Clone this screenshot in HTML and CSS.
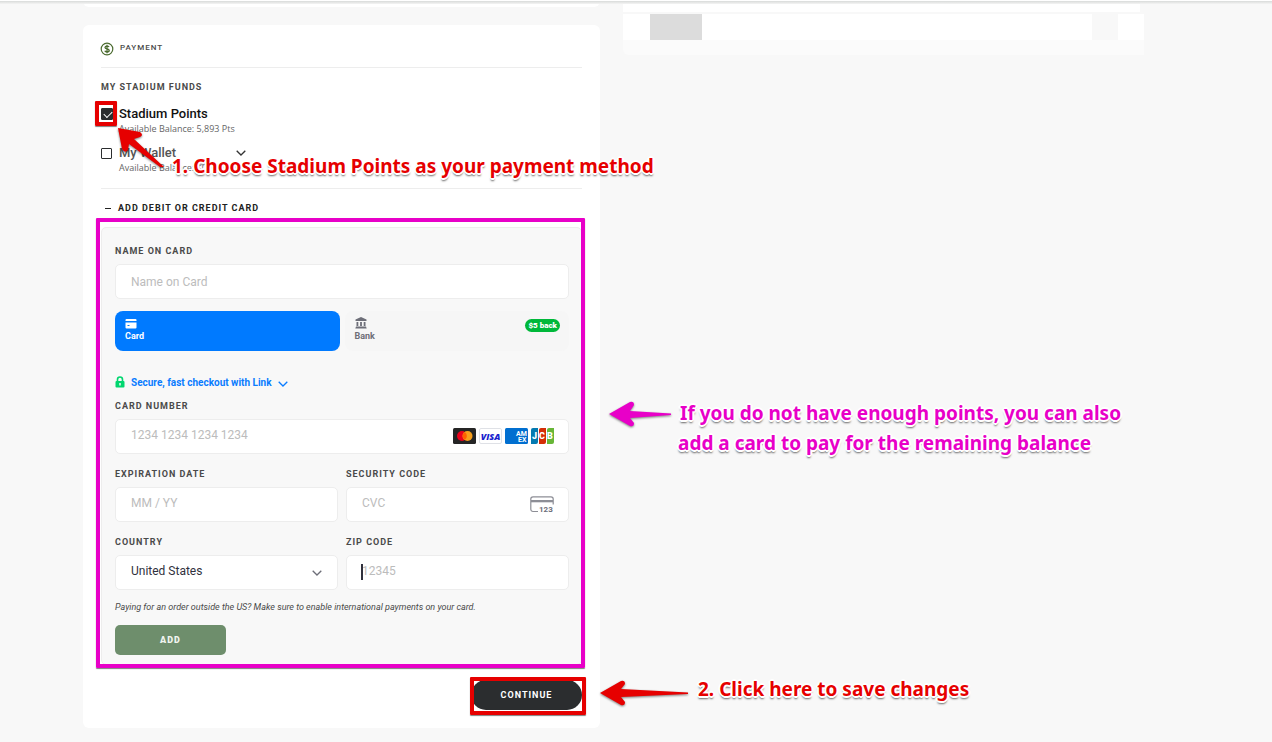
FILE: index.html
```html
<!DOCTYPE html>
<html lang="en">
<head>
  <meta charset="UTF-8">
  <meta name="viewport" content="width=device-width, initial-scale=1.0">
  <title>Checkout - Payment</title>
  <link rel="stylesheet" href="styles.css">
</head>
<body>
  <header class="topbar"></header>

  <main class="page">
    <div class="column">
      <section class="card card-previous"></section>

      <section class="card payment">
        <div class="payment-header">
          <svg class="dollar-icon" viewBox="0 0 14 14" width="14" height="14" fill="none" stroke="#4b6b2f">
            <circle cx="7" cy="7" r="5.8" stroke-width="1.2"/>
            <path d="M9 5.1C8.7 4.4 8 4.1 7 4.1C5.8 4.1 5 4.6 5 5.5C5 7.5 9.2 6.4 9.2 8.5C9.2 9.4 8.3 9.9 7.1 9.9C5.9 9.9 5.1 9.5 4.8 8.7M7 2.8V11.2" stroke-width="1.3"/>
          </svg>
          <h2>Payment</h2>
        </div>

        <div class="funds">
          <h3>My Stadium Funds</h3>

          <div class="fund">
            <span class="check-wrap">
              <input type="checkbox" id="points" checked>
              <span class="frame frame-check"></span>
            </span>
            <div>
              <label for="points" class="fund-name">Stadium Points</label>
              <p class="balance">Available Balance: 5,893 Pts</p>
            </div>
          </div>

          <div class="fund fund-wallet">
            <span class="check-wrap"><input type="checkbox" id="wallet"></span>
            <div>
              <label for="wallet" class="fund-name">My Wallet</label>
              <p class="balance">Available Balance: $0</p>
            </div>
            <svg class="wallet-chevron" viewBox="0 0 10 6" width="10" height="6" fill="none" stroke="#333" stroke-width="1.3"><path d="M.7.7L5 5L9.3.7"/></svg>
          </div>

          <!-- Step 1 -->
          <svg class="arrow arrow-points" viewBox="0 0 50 44" width="50" height="44">
            <path d="M1 1L23 5Q27 8 23 10L17 12L47 40L43 40L12 17L11 23Q8 27 5 22Z"/>
          </svg>
          <p class="note note-points">1. Choose Stadium Points as your payment method</p>
        </div>

        <button type="button" class="add-toggle"><span class="minus"></span>Add debit or credit card</button>

        <form class="panel">
          <span class="frame frame-panel"></span>

          <div class="field">
            <label for="name">Name on card</label>
            <input type="text" id="name" placeholder="Name on Card">
          </div>

          <div class="tabs">
            <button type="button" class="tab tab-active">
              <svg viewBox="0 0 12 10" width="12" height="10"><path fill="#fff" d="M1.5 0H10.5A1 1 0 0 1 11.5 1V2H.5V1A1 1 0 0 1 1.5 0ZM.5 3.5H11.5V8.5A1 1 0 0 1 10.5 9.5H1.5A1 1 0 0 1 .5 8.5ZM2.5 6V7H4.5V6Z" fill-rule="evenodd"/></svg>
              Card
            </button>
            <button type="button" class="tab">
              <svg viewBox="0 0 12 12" width="12" height="12" fill="#6d6e78"><path d="M6 0L11.5 2.5V4H.5V2.5ZM1.5 5H3.3V9H1.5ZM5.1 5H6.9V9H5.1ZM8.7 5H10.5V9H8.7ZM1 9.5H11L11.7 11.5H.3Z"/></svg>
              Bank
              <span class="badge">$5 back</span>
            </button>
          </div>

          <button type="button" class="link-row">
            <svg viewBox="0 0 10 12" width="10" height="12"><path d="M2.5 6V3.5A2.5 2.5 0 0 1 7.5 3.5V6" fill="none" stroke="#00d66f" stroke-width="1.6"/><rect x=".5" y="5" width="9" height="6.5" rx="1" fill="#00d66f"/><path d="M5 7V9.5" stroke="#fff" stroke-width="1.4"/></svg>
            <span>Secure, fast checkout with Link</span>
            <svg class="link-chevron" viewBox="0 0 10 6" width="10" height="6" fill="none" stroke="#0a7cff" stroke-width="1.3"><path d="M.7.7L5 5L9.3.7"/></svg>
          </button>

          <div class="fields">
            <div class="field wide">
              <label for="number">Card number</label>
              <div class="input-box">
                <input type="text" id="number" placeholder="1234 1234 1234 1234">
                <div class="brands">
                  <svg viewBox="0 0 23 16" width="23" height="16"><rect width="23" height="16" rx="1.5" fill="#252525"/><circle cx="9" cy="8" r="5" fill="#eb001b"/><circle cx="14.5" cy="8" r="5" fill="#f79e1b"/><path d="M11.75 3.9A5 5 0 0 1 11.75 12.1A5 5 0 0 1 11.75 3.9" fill="#ff5f00"/></svg>
                  <svg viewBox="0 0 23 16" width="23" height="16"><rect x=".5" y=".5" width="22" height="15" rx="1.5" fill="#fff" stroke="#dfe1e6"/><text x="11.5" y="11.5" class="visa" text-anchor="middle">VISA</text></svg>
                  <svg viewBox="0 0 23 16" width="23" height="16"><rect width="23" height="16" rx="1.5" fill="#016fd0"/><text x="11" y="8" class="amex">AM</text><text x="13" y="14" class="amex">EX</text></svg>
                  <svg viewBox="0 0 23 16" width="23" height="16"><path d="M2 0H7V14Q7 16 5 16H0V2Q0 0 2 0Z" fill="#047ab1"/><path d="M10 0H15V14Q15 16 13 16H8V2Q8 0 10 0Z" fill="#d42d06"/><path d="M18 0H23V14Q23 16 21 16H16V2Q16 0 18 0Z" fill="#67b637"/><text x="1" y="11" class="jcb">J</text><text x="8" y="11" class="jcb">C</text><text x="16" y="11" class="jcb">B</text></svg>
                </div>
              </div>
            </div>

            <div class="field">
              <label for="expiry">Expiration date</label>
              <input type="text" id="expiry" placeholder="MM / YY">
            </div>
            <div class="field">
              <label for="cvc">Security code</label>
              <div class="input-box">
                <input type="text" id="cvc" placeholder="CVC">
                <svg class="cvc-icon" viewBox="0 0 24 18" width="24" height="18"><path d="M8 15.5H3A2.2 2.2 0 0 1 .8 13.3V3A2.2 2.2 0 0 1 3 .8H21A2.2 2.2 0 0 1 23.2 3V8.5" fill="none" stroke="#8d8e96" stroke-width="1.2"/><path d="M1 4H23V6.3H1Z" fill="#8d8e96"/><text x="9" y="16">123</text></svg>
              </div>
            </div>

            <div class="field">
              <label for="country">Country</label>
              <div class="input-box">
                <select id="country"><option>United States</option></select>
                <svg class="select-chevron" viewBox="0 0 10 6" width="10" height="6" fill="none" stroke="#6d6e78" stroke-width="1.3"><path d="M.7.7L5 5L9.3.7"/></svg>
              </div>
            </div>
            <div class="field">
              <label for="zip">Zip code</label>
              <div class="input-box">
                <input type="text" id="zip" placeholder="12345">
                <span class="caret"></span>
              </div>
            </div>
          </div>

          <p class="hint">Paying for an order outside the US? Make sure to enable international payments on your card.</p>
          <button type="button" class="add-button">Add</button>

          <svg class="arrow arrow-card" viewBox="0 0 62 26" width="62" height="26">
            <path d="M0 13L21 1Q25 0 25 4L21 10L62 12.5V14L21 17L25 22Q25 26 21 25Z"/>
          </svg>
          <p class="note note-card"><span class="first-line">If you do not have enough points, you can also</span><br>add a card to pay for the remaining balance</p>
        </form>

        <div class="actions">
          <button type="button" class="continue">Continue</button>
          <span class="frame frame-continue"></span>
          <!-- Step 2 -->
          <svg class="arrow arrow-continue" viewBox="0 0 88 26" width="88" height="26">
            <path d="M0 13L21 1Q25 0 25 4L21 9L88 12.5V14L21 17L25 22Q25 26 21 25Z"/>
          </svg>
          <p class="note note-continue">2. Click here to save changes</p>
        </div>
      </section>
    </div>

    <aside class="summary">
      <div class="summary-top"></div>
      <div class="summary-row">
        <span class="block block-dark"></span>
        <span class="block block-light"></span>
      </div>
      <div class="summary-bottom"></div>
    </aside>
  </main>
</body>
</html>
```
FILE: styles.css
```css
:root {
  --page-bg: #f8f8f8;
  --line: #ededed;
  --red: #e60000;
  --pink: #e800c8;
  --text: #4a4a4a;
}

* {
  box-sizing: border-box;
}

body {
  margin: 0;
  background-color: var(--page-bg);
  color: var(--text);
  font-family: Roboto, Arial, sans-serif;
  font-size: 12px;
  overflow-x: hidden;
}

h2, h3, p {
  margin: 0;
}

button, input, select {
  font-family: inherit;
}

button {
  border: none;
  cursor: pointer;
}

svg {
  display: block;
  flex: none;
}

.topbar {
  height: 4px;
  margin-bottom: -4px;
  position: relative;
  z-index: 2;
  background: linear-gradient(#ffffff 25%, #d9dbda 26%, #f4f4f4);
}

.page {
  display: grid;
  grid-template-columns: 517fr 521fr;
  gap: 23px;
  padding: 0 128px 14px 83px;
}

.card {
  background-color: #fff;
  border-radius: 6px;
}

.card-previous {
  height: 7px;
  border-radius: 0 0 6px 6px;
  margin-bottom: 18px;
}

.payment {
  padding: 0 18px 18px;
}

.payment-header {
  display: flex;
  align-items: center;
  gap: 6px;
  height: 43px;
  padding-top: 3px;
  border-bottom: 1px solid var(--line);
}

.dollar-icon {
  margin-left: -1px;
  margin-top: 2px;
}

h2, h3, .field label, .add-toggle {
  font-size: 9px;
  line-height: 16px;
  font-weight: 700;
  letter-spacing: 1px;
  text-transform: uppercase;
}

h2 {
  font-size: 8px;
  font-weight: 500;
}

/* Funds */
.funds {
  position: relative;
  padding: 11px 0 14px;
  border-bottom: 1px solid var(--line);
}

.fund {
  display: flex;
  gap: 6px;
  margin-top: 10px;
}

.fund-wallet {
  margin-top: 9px;
}

.check-wrap {
  position: relative;
  width: 12px;
  height: 18px;
  display: flex;
  align-items: center;
}

.check-wrap input {
  appearance: none;
  width: 12px;
  height: 12px;
  margin: 0;
  border: 1px solid #2b2d2f;
  border-radius: 1px;
  background-color: #fff;
}

.fund-wallet .check-wrap input {
  width: 11px;
  height: 11px;
}

.check-wrap input:checked {
  background-color: #2b2d2f;
}

.check-wrap input:checked::before {
  content: "";
  display: block;
  width: 7px;
  height: 4px;
  margin: 2px 0 0 2px;
  border-left: 1px solid #fff;
  border-bottom: 1px solid #fff;
  transform: rotate(-45deg);
}

.fund-name {
  display: block;
  font-size: 13px;
  line-height: 18px;
  font-weight: 500;
  color: #111;
}

.fund-wallet .fund-name {
  color: #555;
}

.balance {
  font-family: "Open Sans", sans-serif;
  font-size: 9px;
  line-height: 12px;
  color: #666;
}

.wallet-chevron {
  margin: 6px 0 0 23px;
}

.add-toggle {
  display: flex;
  align-items: center;
  gap: 7px;
  height: 38px;
  padding: 0 4px;
  background: none;
  color: #222;
}

.minus {
  width: 6px;
  height: 1px;
  background-color: #222;
}

/* Card form */
.panel {
  position: relative;
  padding: 15px 12px 9px 13px;
  border: 1px solid var(--line);
  border-radius: 5px;
  background-color: var(--page-bg);
}

.field label {
  display: block;
  margin-bottom: 5px;
}

.field input, .field select {
  display: block;
  width: 100%;
  height: 35px;
  padding: 0 15px;
  border: 1px solid var(--line);
  border-radius: 5px;
  background-color: #fff;
  color: #30313d;
  font-size: 12px;
  appearance: none;
  outline: none;
}

.field ::placeholder {
  color: #bcbcbc;
}

.tabs {
  display: grid;
  grid-template-columns: 1fr 1fr;
  gap: 5px;
  margin-top: 12px;
}

.tab {
  position: relative;
  display: flex;
  flex-direction: column;
  justify-content: flex-end;
  align-items: flex-start;
  gap: 1px;
  height: 40px;
  padding: 0 10px 9px;
  border-radius: 8px;
  background-color: #f6f6f6;
  color: #6d6e78;
  font-size: 9px;
  line-height: 12px;
  font-weight: 700;
}

.tab-active {
  background-color: #007aff;
  color: #fff;
}

.badge {
  position: absolute;
  top: 8px;
  right: 9px;
  padding: 0 3px;
  border-radius: 7px;
  background-color: #00b83a;
  color: #fff;
  font-size: 8px;
  line-height: 13px;
  font-weight: 900;
}

.link-row {
  display: flex;
  align-items: center;
  gap: 6px;
  height: 16px;
  margin: 23px 0 8px;
  padding: 0;
  background: none;
  color: #0a7cff;
  font-size: 10px;
  font-weight: 700;
}

.link-chevron {
  margin-top: 4px;
}

.fields {
  display: grid;
  grid-template-columns: 1fr 1fr;
  gap: 12px 8px;
}

.fields input, .fields select {
  padding-bottom: 3px;
}

.wide {
  grid-column: span 2;
}

.input-box {
  position: relative;
}

.brands {
  position: absolute;
  top: 9px;
  right: 15px;
  display: flex;
  gap: 3px;
}

.visa {
  font: italic 800 9px "Open Sans", sans-serif;
  fill: #1a1fce;
}

.amex {
  font: 700 7px Roboto, sans-serif;
  fill: #fff;
}

.jcb {
  font: 900 9px Roboto, sans-serif;
  fill: #fff;
}

.cvc-icon {
  position: absolute;
  top: 9px;
  right: 15px;
}

.cvc-icon text {
  font: 700 8px Roboto, sans-serif;
  fill: #6d6e78;
}

.select-chevron {
  position: absolute;
  top: 15px;
  right: 16px;
}

.caret {
  position: absolute;
  top: 9px;
  left: 15px;
  width: 2px;
  height: 16px;
  background-color: #30313d;
}

.hint {
  margin: 9px 0 10px;
  font-size: 9px;
  line-height: 16px;
  font-style: italic;
}

.add-button {
  display: block;
  width: 111px;
  height: 30px;
  border-radius: 5px;
  background-color: #6e8e6c;
  color: #f0f4ef;
  font-size: 9px;
  font-weight: 900;
  letter-spacing: 1px;
  text-transform: uppercase;
}

.actions {
  position: relative;
  display: flex;
  justify-content: flex-end;
  margin-top: 15px;
}

.continue {
  width: 111px;
  height: 30px;
  border-radius: 15px;
  background-color: #2b2d2f;
  color: #fff;
  font-size: 9px;
  font-weight: 700;
  letter-spacing: 1px;
  text-transform: uppercase;
}

/* Annotations drawn over the page */
.frame {
  position: absolute;
  border: 4px solid var(--red);
  border-radius: 1px;
  box-shadow: 0 1px 1px rgba(0, 0, 0, 0.5);
  pointer-events: none;
}

.frame-check {
  inset: -4px -4px -3px -6px;
}

.frame-panel {
  inset: -10px -4px -4px -6px;
  border-color: var(--pink);
}

.frame-continue {
  top: -3px;
  right: -4px;
  width: 116px;
  height: 38px;
}

.arrow {
  position: absolute;
  fill: var(--red);
  filter: drop-shadow(0 1px 1px rgba(0, 0, 0, 0.5));
}

.arrow-points {
  top: 59px;
  left: 16px;
}

.arrow-card {
  top: 173px;
  left: calc(100% + 28px);
  fill: var(--pink);
}

.arrow-continue {
  top: 0;
  left: calc(100% + 18px);
}

.note {
  position: absolute;
  z-index: 1;
  white-space: nowrap;
  font-family: "Noto Sans", sans-serif;
  font-size: 19px;
  line-height: 30px;
  font-weight: 700;
  color: var(--red);
  text-shadow: -2px 0 #fff, 2px 0 #fff, 0 -2px #fff, 0 2px #fff, -1px -1px #fff, 1px -1px #fff, -1px 1px #fff, 1px 1px #fff, 0 3px 2px #666;
}

.note-points {
  top: 83px;
  left: 71px;
}

.note-card {
  top: 170px;
  left: calc(100% + 97px);
  color: var(--pink);
}

.first-line {
  padding-left: 2px;
}

.note-continue {
  top: -6px;
  left: calc(100% + 116px);
}

/* Order summary, contents hidden */
.summary-top {
  height: 12px;
  margin-right: 4px;
  background-color: #fff;
}

.summary-row {
  display: flex;
  justify-content: space-between;
  margin-top: 2px;
  padding: 0 26px 0 27px;
  background-color: #fff;
}

.block {
  height: 26px;
}

.block-dark {
  width: 52px;
  background-color: #dcdcdc;
}

.block-light {
  width: 26px;
  background-color: #f8f8f8;
}

.summary-bottom {
  height: 15px;
  border-radius: 0 0 0 6px;
  background-color: #fbfbfb;
}
```
